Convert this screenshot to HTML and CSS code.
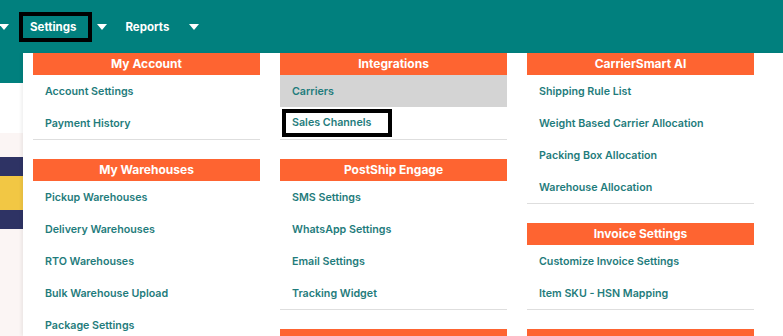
FILE: index.html
```html
<!DOCTYPE html>
<html lang="en">
<head>
  <meta charset="UTF-8">
  <meta name="viewport" content="width=device-width, initial-scale=1.0">
  <title>Settings</title>
  <link rel="stylesheet" href="styles.css">
</head>
<body>
  <div class="topbar">
    <span class="caret caret-first"></span>
    <a class="nav-link active">Settings</a>
    <span class="caret"></span>
    <a class="nav-link">Reports</a>
    <span class="caret"></span>
  </div>

  <div class="page">
    <div class="side">
      <div class="side-teal"></div>
      <div class="side-white"></div>
      <div class="side-pink">
        <div class="side-navy"></div>
        <div class="side-yellow"></div>
        <div class="side-navy"></div>
      </div>
    </div>

    <div class="menu">
      <div class="col">
        <div class="group">
          <div class="group-title">My Account</div>
          <a class="item">Account Settings</a>
          <a class="item">Payment History</a>
        </div>
        <div class="group last">
          <div class="group-title">My Warehouses</div>
          <a class="item">Pickup Warehouses</a>
          <a class="item">Delivery Warehouses</a>
          <a class="item">RTO Warehouses</a>
          <a class="item">Bulk Warehouse Upload</a>
          <a class="item">Package Settings</a>
        </div>
      </div>

      <div class="col">
        <div class="group">
          <div class="group-title">Integrations</div>
          <a class="item hover">Carriers</a>
          <a class="item"><span class="marked">Sales Channels</span></a>
        </div>
        <div class="group">
          <div class="group-title">PostShip Engage</div>
          <a class="item">SMS Settings</a>
          <a class="item">WhatsApp Settings</a>
          <a class="item">Email Settings</a>
          <a class="item">Tracking Widget</a>
        </div>
        <div class="group">
          <div class="group-title">&nbsp;</div>
        </div>
      </div>

      <div class="col">
        <div class="group">
          <div class="group-title">CarrierSmart AI</div>
          <a class="item">Shipping Rule List</a>
          <a class="item">Weight Based Carrier Allocation</a>
          <a class="item">Packing Box Allocation</a>
          <a class="item">Warehouse Allocation</a>
        </div>
        <div class="group">
          <div class="group-title">Invoice Settings</div>
          <a class="item">Customize Invoice Settings</a>
          <a class="item">Item SKU - HSN Mapping</a>
        </div>
        <div class="group">
          <div class="group-title">&nbsp;</div>
        </div>
      </div>

      <div class="scrollbar">
        <span class="scroll-arrow"></span>
        <span class="scroll-thumb"></span>
      </div>
    </div>
  </div>
</body>
</html>
```

FILE: styles.css
```css
html, body {
  margin: 0;
  height: 100%;
  overflow: hidden;
}
body {
  font-family: Inter, "Liberation Sans", sans-serif;
  background: #fff;
}
.topbar {
  display: flex;
  align-items: center;
  height: 53px;
  background: #01807e;
}
.caret {
  width: 0;
  height: 0;
  border-left: 5px solid transparent;
  border-right: 5px solid transparent;
  border-top: 6px solid #fff;
  margin: 0 18px 0 5px;
}
.caret-first {
  margin: 0 10px 0 -1px;
}
.nav-link {
  color: #fff;
  font-size: 11.5px;
  font-weight: 700;
  line-height: 22px;
}
.nav-link.active {
  border: 4px solid #000;
  padding: 0 12px 0 7px;
}
.nav-link + .caret:last-child {
  margin-left: 20px;
}

.page {
  display: flex;
  height: calc(100% - 53px);
}
.side {
  width: 23px;
  flex-shrink: 0;
  display: flex;
  flex-direction: column;
  box-shadow: inset -1px 0 2px rgba(0, 0, 0, 0.08);
}
.side-teal {
  height: 30px;
  background: #01807e;
}
.side-white {
  height: 50px;
  background: #fff;
}
.side-pink {
  flex: 1;
  background: #fbf5f4;
  padding-top: 24px;
}
.side-navy {
  height: 19px;
  background: #2e3364;
}
.side-yellow {
  height: 34px;
  background: #f2c744;
}

.menu {
  flex: 1;
  display: flex;
  gap: 20px;
  padding-left: 10px;
  background: #fff;
  box-shadow: -2px 0 3px rgba(0, 0, 0, 0.06);
}
.col {
  width: 227px;
}
.group {
  border-bottom: 1px solid #dedede;
  margin-bottom: 19px;
}
.group.last {
  border-bottom: none;
}
.group-title {
  background: #fe6431;
  color: #fff;
  font-size: 12px;
  font-weight: 700;
  text-align: center;
  line-height: 22px;
}
.item {
  display: flex;
  align-items: center;
  height: 32px;
  padding-left: 12px;
  color: #1f7c7c;
  font-size: 10.7px;
  font-weight: 600;
}
.item.hover {
  background: #d4d4d4;
}
.marked {
  display: inline-block;
  color: #1f7c7c;
  line-height: 20px;
  border: 4px solid #000;
  margin-left: -10px;
  padding: 0 17px 0 6px;
}

.scrollbar {
  margin-left: 13px;
  width: 12px;
  display: flex;
  flex-direction: column;
  align-items: center;
  padding-top: 6px;
}
.scroll-arrow {
  width: 0;
  height: 0;
  border-left: 6px solid transparent;
  border-right: 6px solid transparent;
  border-bottom: 7px solid #8a8a8a;
}
.scroll-thumb {
  margin-top: 10px;
  flex: 1;
  width: 11px;
  background: #8a8a8a;
  border-radius: 6px 6px 0 0;
}
```
